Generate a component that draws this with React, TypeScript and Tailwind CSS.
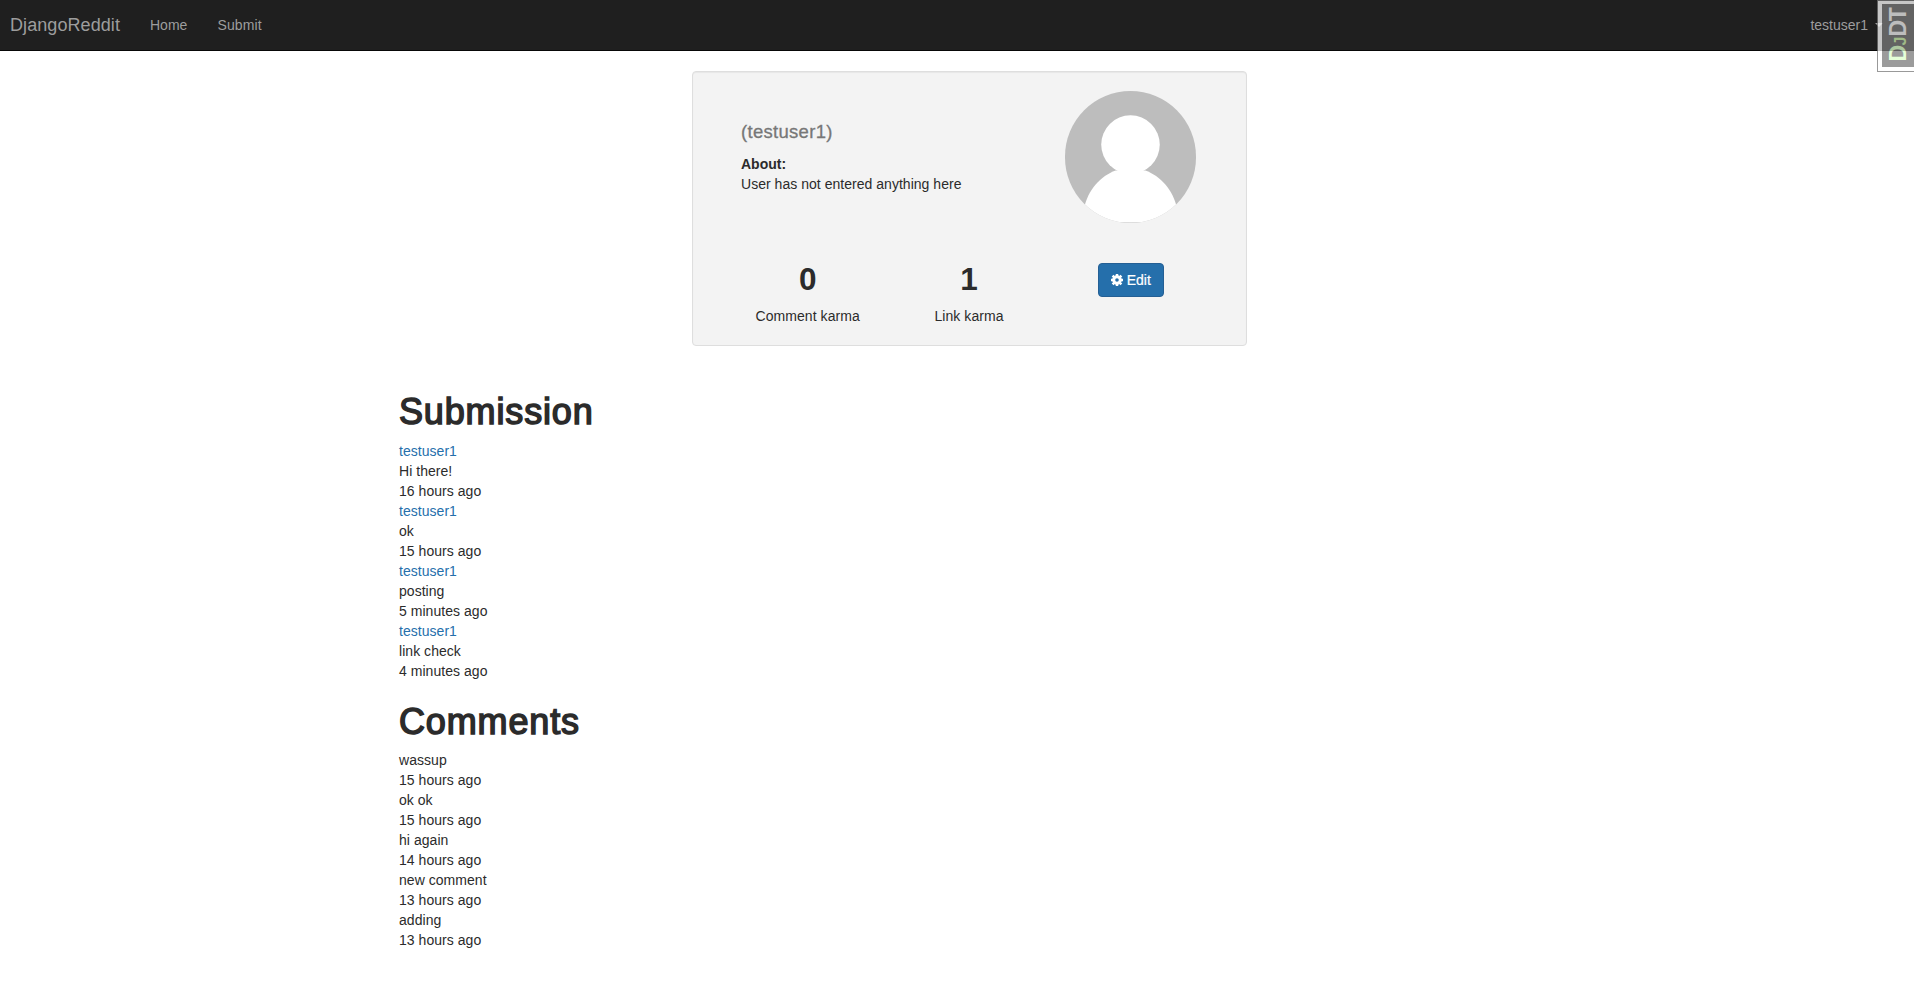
const submissions = [
  { title: "Hi there!", time: "16 hours ago" },
  { title: "ok", time: "15 hours ago" },
  { title: "posting", time: "5 minutes ago" },
  { title: "link check", time: "4 minutes ago" },
];

const comments = [
  { text: "wassup", time: "15 hours ago" },
  { text: "ok ok", time: "15 hours ago" },
  { text: "hi again", time: "14 hours ago" },
  { text: "new comment", time: "13 hours ago" },
  { text: "adding", time: "13 hours ago" },
];

function Navbar() {
  return (
    <nav className="flex h-[51px] items-center border-b border-[#080808] bg-[#1f1f1f] pl-[10px] text-[#9d9d9d]">
      <a href="#" className="w-[140px] text-[18px] leading-5 tracking-[0.08px]">DjangoReddit</a>
      <a href="#" className="w-[67.5px]">Home</a>
      <a href="#" className="tracking-[0.1px]">Submit</a>
      <a href="#" className="ml-auto flex items-center pr-[31px]">
        testuser1
        <span className="ml-[7px] border-x-4 border-t-4 border-x-transparent border-t-[#9d9d9d]" />
      </a>
    </nav>
  );
}

function DebugToolbarHandle() {
  return (
    <div className="absolute top-0 left-[1877px] h-[72px] w-[37px] overflow-hidden opacity-75">
      <div className="h-[72px] w-[50px] border border-[#777] bg-white p-[4px] pt-[3px]">
        <div className="flex h-[63px] w-full items-start justify-start bg-[#7a7a7a] pt-[5px] pl-[4px]">
          <div className="flex rotate-180 items-baseline text-[23px] leading-[24px] font-bold text-[#f2f2f2] [writing-mode:sideways-rl]">
            <span className="tracking-[-0.5px] text-[#dfc]">D</span>
            <span className="text-[16px] tracking-[-0.5px] text-[#cea]">J</span>
            <span className="tracking-[-1.3px]">DT</span>
          </div>
        </div>
      </div>
    </div>
  );
}

function Avatar() {
  return (
    <svg viewBox="0 0 132 132" className="h-[132px] w-[131px] rounded-full bg-[#bdbdbd]">
      <circle cx="66" cy="53.5" r="29.5" fill="#fff" />
      <path d="M51 79.5C36 85 23 99 19 118V132H113V118C109 99 96 85 81 79.5Z" fill="#fff" />
    </svg>
  );
}

function CogIcon() {
  return (
    <svg viewBox="-6 -6 12 12" className="size-3" fill="none" stroke="currentColor">
      <circle r="3.3" strokeWidth="3" />
      <path d="M0-6V-4M0 4V6M-6 0H-4M4 0H6M-4.4-4.4L-2.9-2.9M2.9 2.9L4.4 4.4M-4.4 4.4L-2.9 2.9M2.9-2.9L4.4-4.4" strokeWidth="2.5" />
    </svg>
  );
}

function Karma({ value, label }: { value: number; label: string }) {
  return (
    <div className="flex-1 text-center">
      <h2 className="text-[31.5px] leading-[33px] font-bold">{value}</h2>
      <p className="mt-[10px] tracking-[0.06px]">{label}</p>
    </div>
  );
}

function ProfileCard() {
  return (
    <section className="ml-[692px] h-[275px] w-[555px] rounded border border-[#dedede] bg-[#f3f3f3] px-[34px] shadow-[inset_0_1px_1px_rgba(0,0,0,0.05)]">
      <div className="flex pt-[19px]">
        <div className="w-[323px] pt-[31px] pl-[14px]">
          <h4 className="text-[18.5px] leading-5 tracking-[0.3px] text-[#777] [-webkit-text-stroke:0.3px_#777]">(testuser1)</h4>
          <p className="mt-[12px] font-bold">About:</p>
          <p className="tracking-[0.03px]">User has not entered anything here</p>
        </div>
        <div className="pl-[15px]"><Avatar /></div>
      </div>
      <div className="mt-[40px] flex">
        <Karma value={0} label="Comment karma" />
        <Karma value={1} label="Link karma" />
        <div className="flex flex-1 justify-center pl-px">
          <button className="flex h-[34px] w-[66px] items-center justify-center gap-[4px] rounded border border-[#245f94] bg-[#256fab] pr-px text-white [-webkit-text-stroke:0.2px_white]">
            <CogIcon />
            Edit
          </button>
        </div>
      </div>
    </section>
  );
}

function Heading({ children }: { children: string }) {
  return (
    <h1 className="text-[36px] leading-10 tracking-[0.85px] [-webkit-text-stroke:1.5px_#2b2b2b]">{children}</h1>
  );
}

export default function App() {
  return (
    <div className="relative min-h-[1000px] bg-white font-['Liberation_Sans',Arial,sans-serif] text-[14px] leading-5 text-[#2b2b2b]">
      <Navbar />
      <DebugToolbarHandle />
      <main className="pt-5">
        <ProfileCard />
        <div className="ml-[399px] w-[1140px] pt-[46px] tracking-[0.04px]">
          <Heading>Submission</Heading>
          <div className="pt-[9px]">
            {submissions.map((s) => (
              <div key={s.title}>
                <a href="#" className="block text-[#256fab]">testuser1</a>
                <p>{s.title}</p>
                <p>{s.time}</p>
              </div>
            ))}
          </div>
          <div className="pt-[21px]">
            <Heading>Comments</Heading>
            <div className="pt-2">
              {comments.map((c) => (
                <div key={c.text}>
                  <p>{c.text}</p>
                  <p>{c.time}</p>
                </div>
              ))}
            </div>
          </div>
        </div>
      </main>
    </div>
  );
}
